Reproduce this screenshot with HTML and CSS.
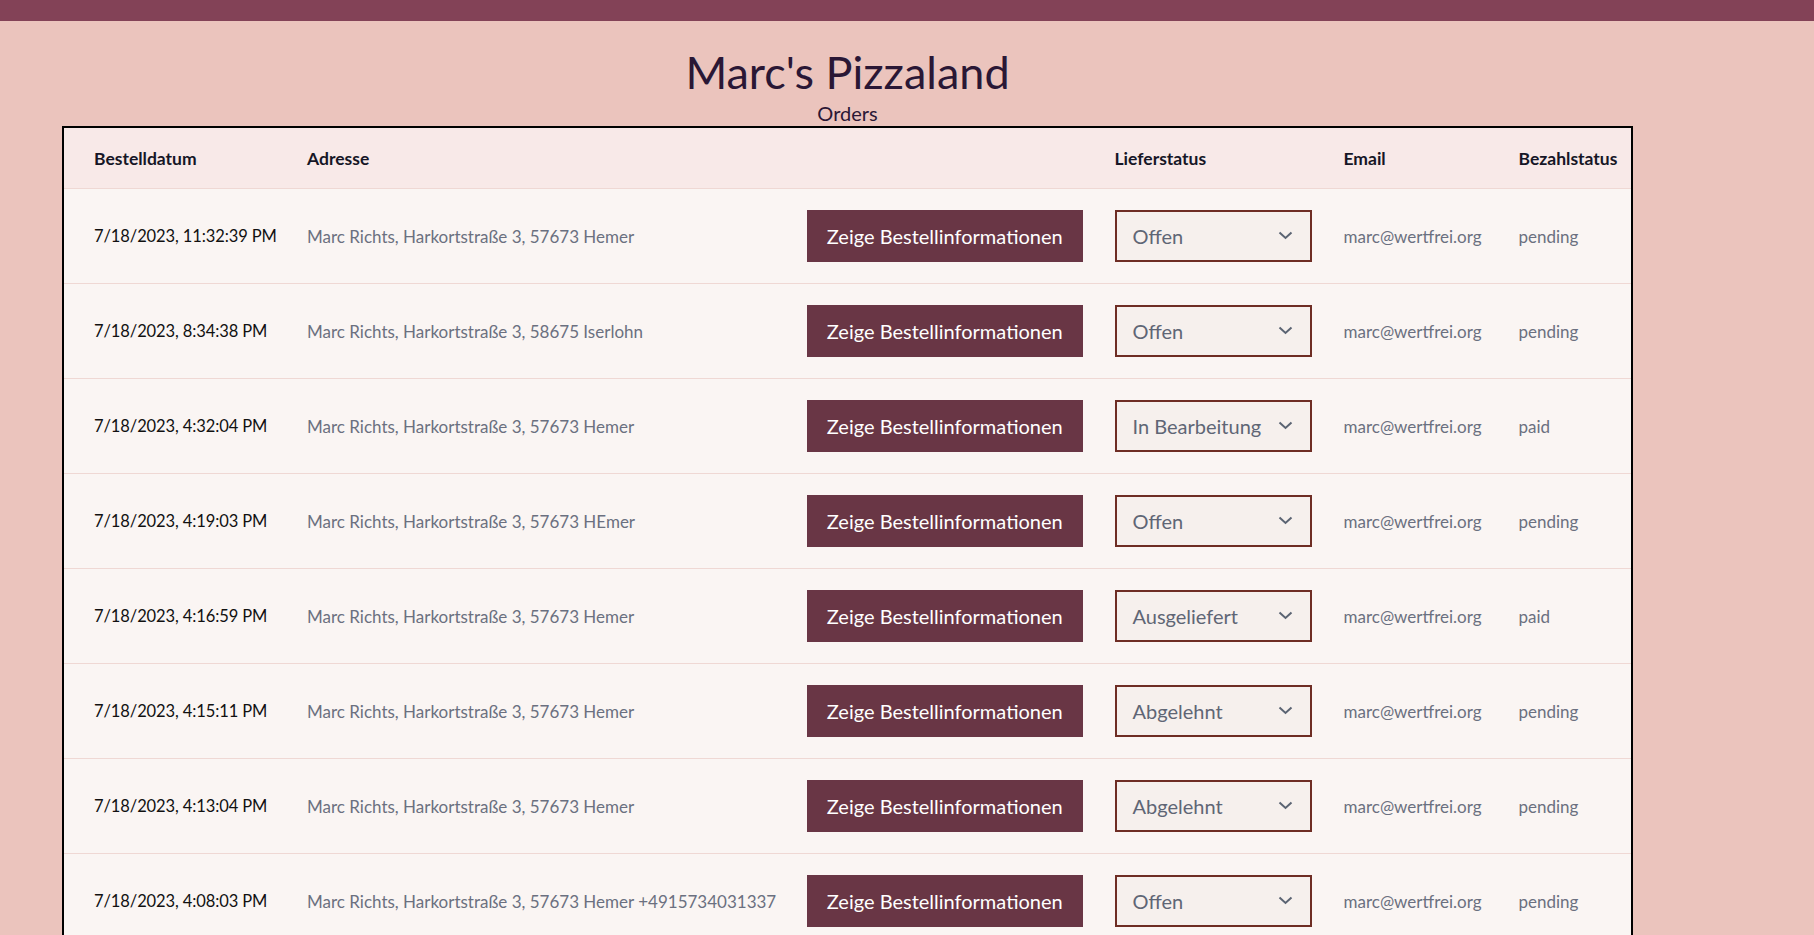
FILE: index.html
```html
<!DOCTYPE html>
<html lang="de">
<head>
<meta charset="utf-8">
<title>Marc's Pizzaland – Orders</title>
<link rel="stylesheet" href="styles.css">
</head>
<body>
<header class="topbar"></header>
<main class="page">
  <h1 class="title">Marc's Pizzaland</h1>
  <p class="subtitle">Orders</p>
  <div class="orders">
    <div class="row head">
      <div class="cell first">Bestelldatum</div>
      <div class="cell">Adresse</div>
      <div class="cell"></div>
      <div class="cell">Lieferstatus</div>
      <div class="cell">Email</div>
      <div class="cell">Bezahlstatus</div>
    </div>

    <div class="row">
      <div class="cell first date">7/18/2023, 11:32:39 PM</div>
      <div class="cell muted">Marc Richts, Harkortstraße 3, 57673 Hemer</div>
      <div class="cell"><button class="btn">Zeige Bestellinformationen</button></div>
      <div class="cell"><div class="select"><span>Offen</span><svg class="chev" width="15" height="9" viewBox="0 0 15 9"><polyline points="1.5,1.5 7.5,7 13.5,1.5" fill="none" stroke="#5b6473" stroke-width="2"/></svg></div></div>
      <div class="cell muted">marc@wertfrei.org</div>
      <div class="cell muted">pending</div>
    </div>

    <div class="row">
      <div class="cell first date">7/18/2023, 8:34:38 PM</div>
      <div class="cell muted">Marc Richts, Harkortstraße 3, 58675 Iserlohn</div>
      <div class="cell"><button class="btn">Zeige Bestellinformationen</button></div>
      <div class="cell"><div class="select"><span>Offen</span><svg class="chev" width="15" height="9" viewBox="0 0 15 9"><polyline points="1.5,1.5 7.5,7 13.5,1.5" fill="none" stroke="#5b6473" stroke-width="2"/></svg></div></div>
      <div class="cell muted">marc@wertfrei.org</div>
      <div class="cell muted">pending</div>
    </div>

    <div class="row">
      <div class="cell first date">7/18/2023, 4:32:04 PM</div>
      <div class="cell muted">Marc Richts, Harkortstraße 3, 57673 Hemer</div>
      <div class="cell"><button class="btn">Zeige Bestellinformationen</button></div>
      <div class="cell"><div class="select"><span>In Bearbeitung</span><svg class="chev" width="15" height="9" viewBox="0 0 15 9"><polyline points="1.5,1.5 7.5,7 13.5,1.5" fill="none" stroke="#5b6473" stroke-width="2"/></svg></div></div>
      <div class="cell muted">marc@wertfrei.org</div>
      <div class="cell muted">paid</div>
    </div>

    <div class="row">
      <div class="cell first date">7/18/2023, 4:19:03 PM</div>
      <div class="cell muted">Marc Richts, Harkortstraße 3, 57673 HEmer</div>
      <div class="cell"><button class="btn">Zeige Bestellinformationen</button></div>
      <div class="cell"><div class="select"><span>Offen</span><svg class="chev" width="15" height="9" viewBox="0 0 15 9"><polyline points="1.5,1.5 7.5,7 13.5,1.5" fill="none" stroke="#5b6473" stroke-width="2"/></svg></div></div>
      <div class="cell muted">marc@wertfrei.org</div>
      <div class="cell muted">pending</div>
    </div>

    <div class="row">
      <div class="cell first date">7/18/2023, 4:16:59 PM</div>
      <div class="cell muted">Marc Richts, Harkortstraße 3, 57673 Hemer</div>
      <div class="cell"><button class="btn">Zeige Bestellinformationen</button></div>
      <div class="cell"><div class="select"><span>Ausgeliefert</span><svg class="chev" width="15" height="9" viewBox="0 0 15 9"><polyline points="1.5,1.5 7.5,7 13.5,1.5" fill="none" stroke="#5b6473" stroke-width="2"/></svg></div></div>
      <div class="cell muted">marc@wertfrei.org</div>
      <div class="cell muted">paid</div>
    </div>

    <div class="row">
      <div class="cell first date">7/18/2023, 4:15:11 PM</div>
      <div class="cell muted">Marc Richts, Harkortstraße 3, 57673 Hemer</div>
      <div class="cell"><button class="btn">Zeige Bestellinformationen</button></div>
      <div class="cell"><div class="select"><span>Abgelehnt</span><svg class="chev" width="15" height="9" viewBox="0 0 15 9"><polyline points="1.5,1.5 7.5,7 13.5,1.5" fill="none" stroke="#5b6473" stroke-width="2"/></svg></div></div>
      <div class="cell muted">marc@wertfrei.org</div>
      <div class="cell muted">pending</div>
    </div>

    <div class="row">
      <div class="cell first date">7/18/2023, 4:13:04 PM</div>
      <div class="cell muted">Marc Richts, Harkortstraße 3, 57673 Hemer</div>
      <div class="cell"><button class="btn">Zeige Bestellinformationen</button></div>
      <div class="cell"><div class="select"><span>Abgelehnt</span><svg class="chev" width="15" height="9" viewBox="0 0 15 9"><polyline points="1.5,1.5 7.5,7 13.5,1.5" fill="none" stroke="#5b6473" stroke-width="2"/></svg></div></div>
      <div class="cell muted">marc@wertfrei.org</div>
      <div class="cell muted">pending</div>
    </div>

    <div class="row">
      <div class="cell first date">7/18/2023, 4:08:03 PM</div>
      <div class="cell muted">Marc Richts, Harkortstraße 3, 57673 Hemer +4915734031337</div>
      <div class="cell"><button class="btn">Zeige Bestellinformationen</button></div>
      <div class="cell"><div class="select"><span>Offen</span><svg class="chev" width="15" height="9" viewBox="0 0 15 9"><polyline points="1.5,1.5 7.5,7 13.5,1.5" fill="none" stroke="#5b6473" stroke-width="2"/></svg></div></div>
      <div class="cell muted">marc@wertfrei.org</div>
      <div class="cell muted">pending</div>
    </div>
  </div>
</main>
</body>
</html>
```

FILE: styles.css
```css
html, body {
  margin: 0;
  padding: 0;
}

body {
  background: #ebc4bd;
  font-family: Lato, "Open Sans", sans-serif;
  color: #111111;
}

.topbar {
  height: 21px;
  background: #834257;
}

.page {
  margin-left: 62px;
  width: 1571px;
}

.title {
  margin: 22px 0 0;
  font-size: 45px;
  font-weight: 400;
  line-height: 59px;
  text-align: center;
  color: #2a1735;
}

.subtitle {
  margin: 0 0 2px;
  font-size: 20px;
  line-height: 22px;
  text-align: center;
  color: #2a1735;
}

.orders {
  border: 2px solid #000000;
  background: #faf5f3;
}

.row {
  display: grid;
  grid-template-columns: 227px 500px 307.5px 229px 175px 129px;
  height: 94px;
  border-bottom: 1px solid #efd8d4;
}

.row.head {
  height: 60px;
  background: #f8e9e8;
  font-weight: 700;
  color: #161626;
}

.row.head .cell {
  font-size: 17.5px;
}

.cell {
  display: flex;
  align-items: center;
  padding: 0 16px;
  font-size: 16.5px;
  white-space: nowrap;
}

.cell.first {
  padding-left: 30px;
}

.date {
  color: #111111;
  letter-spacing: -0.1px;
}

.cell.muted {
  color: #6b7080;
  font-size: 17px;
}

.btn {
  height: 52px;
  width: 278px;
  border: none;
  background: #693645;
  color: #ffffff;
  font-family: inherit;
  font-size: 20px;
  padding: 0;
  cursor: pointer;
}

.select {
  box-sizing: border-box;
  width: 199px;
  height: 52px;
  border: 2px solid #6e2d24;
  background: #f6f0ed;
  display: flex;
  align-items: center;
  justify-content: space-between;
  padding: 0 17px 0 16px;
  font-size: 20px;
  color: #5f6675;
}

.chev {
  display: block;
  margin-top: -2px;
}
```
